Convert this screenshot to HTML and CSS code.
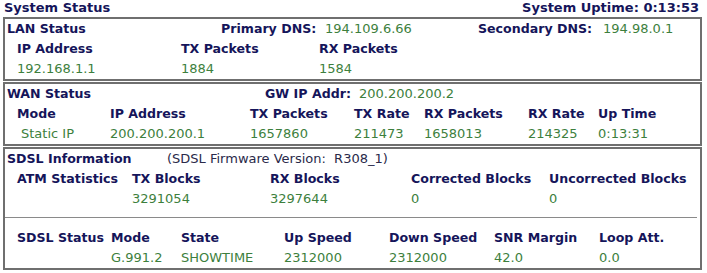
FILE: index.html
```html
<!DOCTYPE html>
<html lang="en">
<head>
    <meta charset="UTF-8">
    <title>System Status</title>
    <link rel="stylesheet" href="styles.css">
</head>
<body>
    <div class="page-head">
        <span class="lbl">System Status</span>
        <span class="lbl">System Uptime: 0:13:53</span>
    </div>

    <!-- LAN -->
    <div class="box">
        <div class="row lan-top">
            <span class="lbl">LAN Status</span>
            <span class="lbl">Primary DNS:</span>
            <span class="val">194.109.6.66</span>
            <span class="lbl">Secondary DNS:</span>
            <span class="val">194.98.0.1</span>
        </div>
        <div class="row lan-cols indent">
            <span class="lbl">IP Address</span>
            <span class="lbl">TX Packets</span>
            <span class="lbl">RX Packets</span>
        </div>
        <div class="row lan-cols indent">
            <span class="val">192.168.1.1</span>
            <span class="val">1884</span>
            <span class="val">1584</span>
        </div>
    </div>

    <!-- WAN -->
    <div class="box">
        <div class="row wan-top">
            <span class="lbl">WAN Status</span>
            <span class="lbl">GW IP Addr:</span>
            <span class="val">200.200.200.2</span>
        </div>
        <div class="row wan-cols indent">
            <span class="lbl">Mode</span>
            <span class="lbl">IP Address</span>
            <span class="lbl">TX Packets</span>
            <span class="lbl">TX Rate</span>
            <span class="lbl">RX Packets</span>
            <span class="lbl">RX Rate</span>
            <span class="lbl">Up Time</span>
        </div>
        <div class="row wan-cols indent">
            <span class="val mode">Static IP</span>
            <span class="val">200.200.200.1</span>
            <span class="val">1657860</span>
            <span class="val">211473</span>
            <span class="val">1658013</span>
            <span class="val">214325</span>
            <span class="val">0:13:31</span>
        </div>
    </div>

    <!-- SDSL -->
    <div class="box">
        <div class="row sdsl-top">
            <span class="lbl">SDSL Information</span>
            <span class="fw">(SDSL Firmware Version:&nbsp; R308_1)</span>
        </div>
        <div class="row atm-cols indent">
            <span class="lbl">ATM Statistics</span>
            <span class="lbl">TX Blocks</span>
            <span class="lbl">RX Blocks</span>
            <span class="lbl">Corrected Blocks</span>
            <span class="lbl">Uncorrected Blocks</span>
        </div>
        <div class="row atm-cols indent">
            <span></span>
            <span class="val">3291054</span>
            <span class="val">3297644</span>
            <span class="val">0</span>
            <span class="val">0</span>
        </div>
        <hr class="sep">
        <div class="row sdsl-cols indent">
            <span class="lbl">SDSL Status</span>
            <span class="lbl">Mode</span>
            <span class="lbl">State</span>
            <span class="lbl">Up Speed</span>
            <span class="lbl">Down Speed</span>
            <span class="lbl">SNR Margin</span>
            <span class="lbl">Loop Att.</span>
        </div>
        <div class="row sdsl-cols indent">
            <span></span>
            <span class="val">G.991.2</span>
            <span class="val">SHOWTIME</span>
            <span class="val">2312000</span>
            <span class="val">2312000</span>
            <span class="val">42.0</span>
            <span class="val">0.0</span>
        </div>
    </div>
</body>
</html>
```

FILE: styles.css
```css
body {
    margin: 0;
    font-family: "DejaVu Sans", Verdana, sans-serif;
    font-size: 13px;
    color: #15155a;
    background: #fff;
}

.page-head {
    display: flex;
    justify-content: space-between;
    height: 17px;
    line-height: 15px;
    padding: 0 8px 0 4px;
}

.lbl {
    font-size: 12.6px;
    font-weight: bold;
    color: #15155a;
    white-space: nowrap;
}

.page-head .lbl {
    font-size: 13px;
}

.val {
    color: #3d7f3d;
    white-space: nowrap;
}

.fw {
    color: #2a2a4a;
    white-space: nowrap;
}

.box {
    border: 2px solid #6f6f6f;
    margin: 0 5px 1px 3px;
}

.row {
    display: grid;
    height: 20px;
    line-height: 20px;
    padding-left: 2px;
}

.row.indent {
    padding-left: 12px;
}

.lan-top {
    grid-template-columns: 214px 104px 153px 125px 1fr;
}

.lan-cols {
    grid-template-columns: 164px 138px 1fr;
}

.wan-top {
    grid-template-columns: 258px 94px 1fr;
}

.wan-cols {
    grid-template-columns: 93px 140px 104px 70px 104px 70px 1fr;
}

.mode {
    padding-left: 4px;
}

.sdsl-top {
    grid-template-columns: 160px 1fr;
}

.atm-cols {
    grid-template-columns: 115px 138px 141px 138px 1fr;
}

.sdsl-cols {
    grid-template-columns: 94px 70px 103px 105px 105px 105px 1fr;
}

.sep {
    border: none;
    border-top: 1px solid #8a8a8a;
    margin: 8px 3px 10px 0;
}
```
